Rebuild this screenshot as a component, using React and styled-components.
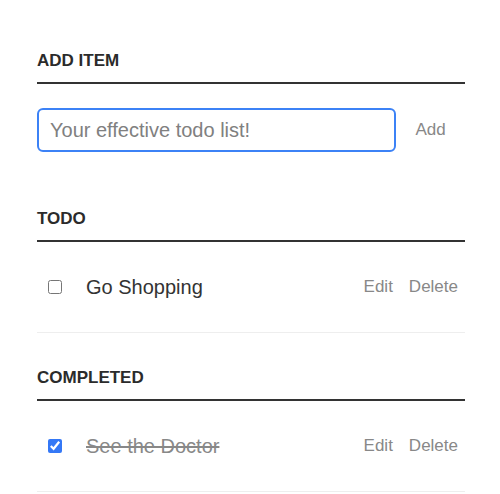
import React from "react";
import styled, { createGlobalStyle } from "styled-components";

const GlobalStyle = createGlobalStyle`
  html, body {
    margin: 0;
    padding: 0;
    background: #fff;
  }
  body {
    font-family: "Liberation Sans", Arial, Helvetica, sans-serif;
    color: #333;
  }
  * { box-sizing: border-box; }
`;

const Container = styled.div`
  width: 428px;
  margin: 0 0 0 37px;
  padding-top: 16px;
`;

const Heading = styled.h3`
  margin: 0;
  padding: 35px 0 11px;
  font-size: 17px;
  line-height: 20px;
  font-weight: 700;
  color: #2b2b2b;
  text-transform: uppercase;
  border-bottom: 2px solid #333;
`;

const AddRow = styled.div`
  display: flex;
  align-items: center;
  margin: 24px 0 22px;
`;

const TextInput = styled.input`
  flex: 1;
  min-width: 0;
  height: 44px;
  margin: 0;
  padding: 0 11px;
  font-family: inherit;
  font-size: 20px;
  color: #333;
  background: #fff;
  border: 2px solid #3c82f6;
  border-radius: 6px;
  outline: none;
  &::placeholder {
    color: #808080;
    opacity: 1;
  }
`;

const TextButton = styled.button`
  background: none;
  border: 0;
  margin: 0;
  padding: ${(p) => (p.$wide ? "0" : "0 8px")};
  width: ${(p) => (p.$wide ? "69px" : "auto")};
  font-family: inherit;
  font-size: 17px;
  line-height: 20px;
  color: #888;
  text-align: center;
  cursor: pointer;
`;

const List = styled.ul`
  margin: 0;
  padding: 0;
  list-style: none;
`;

const Item = styled.li`
  display: flex;
  align-items: center;
  padding: 25px 0;
  border-bottom: 1px solid #eee;
`;

const Check = styled.input`
  width: 14px;
  height: 14px;
  margin: 0 0 0 11px;
  flex: none;
  accent-color: #3478f6;
`;

const Label = styled.label`
  flex: 1;
  margin-left: 24px;
  font-size: 20px;
  line-height: 40px;
  color: ${(p) => (p.$done ? "#888" : "#333")};
  text-decoration: ${(p) => (p.$done ? "line-through" : "none")};
`;

const Actions = styled.div`
  display: flex;
  align-items: center;
  margin-right: -1px;
`;

function TodoItem({ text, done }) {
  return (
    <Item>
      <Check type="checkbox" defaultChecked={done} />
      <Label $done={done}>{text}</Label>
      <Actions>
        <TextButton>Edit</TextButton>
        <TextButton>Delete</TextButton>
      </Actions>
    </Item>
  );
}

export default function App() {
  return (
    <>
      <GlobalStyle />
      <Container>
        <Heading>Add Item</Heading>
        <AddRow>
          <TextInput type="text" placeholder="Your effective todo list!" />
          <TextButton $wide>Add</TextButton>
        </AddRow>
        <Heading>Todo</Heading>
        <List>
          <TodoItem text="Go Shopping" done={false} />
        </List>
        <Heading>Completed</Heading>
        <List>
          <TodoItem text="See the Doctor" done={true} />
        </List>
      </Container>
    </>
  );
}
